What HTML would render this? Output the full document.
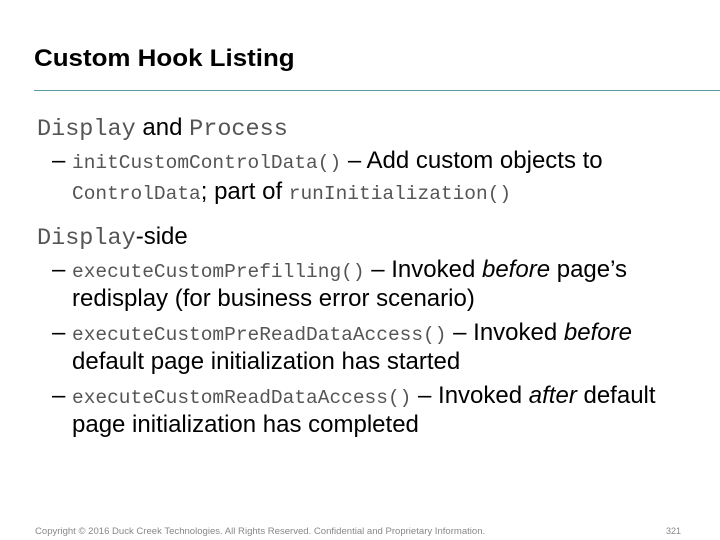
<html><head><style>
body{margin:0;width:720px;height:540px;background:#fff;position:relative;font-family:"Liberation Sans",sans-serif;color:#000;overflow:hidden}
.a{position:absolute;white-space:nowrap;transform-origin:0 0;line-height:28px}
.m{font-family:"Liberation Mono",monospace;color:#555}
.s{font-size:19.5px}
.d{display:inline-block;width:20px}
</style></head><body>
<div class="a" style="left:34px;top:45px;font-size:24px;font-weight:bold;transform:scaleX(1.08)">Custom Hook Listing</div>
<div class="a" style="left:34px;top:90px;width:686px;height:1px;background:#5b9ba8"></div>
<div class="a" style="left:37px;top:114px;font-size:24px"><span class="m" style="font-size:23.5px">Display</span> and <span class="m" style="font-size:23.5px">Process</span></div>
<div class="a" style="left:52px;top:147px;font-size:24px"><span class="d">–</span><span class="m s">initCustomControlData()</span> – Add custom objects to</div>
<div class="a" style="left:72px;top:178px;font-size:24px"><span class="m s">ControlData</span>; part of <span class="m s">runInitialization()</span></div>
<div class="a" style="left:37px;top:223px;font-size:24px"><span class="m" style="font-size:23.5px">Display</span>-side</div>
<div class="a" style="left:52px;top:256px;font-size:24px"><span class="d">–</span><span class="m s">executeCustomPrefilling()</span> – Invoked <i>before</i> page’s</div>
<div class="a" style="left:72px;top:285px;font-size:24px">redisplay (for business error scenario)</div>
<div class="a" style="left:52px;top:319px;font-size:24px"><span class="d">–</span><span class="m s">executeCustomPreReadDataAccess()</span> – Invoked <i>before</i></div>
<div class="a" style="left:72px;top:348px;font-size:24px">default page initialization has started</div>
<div class="a" style="left:52px;top:382px;font-size:24px"><span class="d">–</span><span class="m s">executeCustomReadDataAccess()</span> – Invoked <i>after</i> default</div>
<div class="a" style="left:72px;top:411px;font-size:24px">page initialization has completed</div>
<div class="a" style="left:35px;top:526px;font-size:9px;line-height:11px;color:#888;transform:scaleX(1.06)">Copyright © 2016 Duck Creek Technologies. All Rights Reserved. Confidential and Proprietary Information.</div>
<div class="a" style="left:666px;top:526px;font-size:9px;line-height:11px;color:#888">321</div>
</body></html>
